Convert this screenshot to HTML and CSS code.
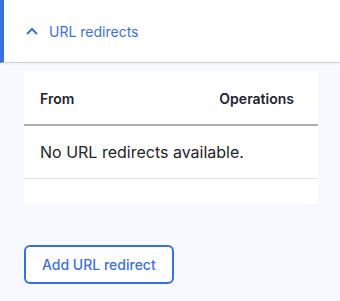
FILE: index.html
```html
<!DOCTYPE html>
<html>
<head>
<meta charset="utf-8">
<link rel="stylesheet" href="styles.css">
</head>
<body>
<div class="summary">
  <svg class="chevron" width="12" height="8" viewBox="0 0 12 8"><polyline points="1,7 6,2 11,7" fill="none" stroke="currentColor" stroke-width="2"/></svg>
  <span class="summary-label">URL redirects</span>
</div>
<div class="content">
  <div class="card">
    <table class="table">
      <thead>
        <tr><th class="col-from">From</th><th class="col-ops">Operations</th></tr>
      </thead>
      <tbody>
        <tr><td colspan="2">No URL redirects available.</td></tr>
      </tbody>
    </table>
  </div>
  <button class="btn">Add URL redirect</button>
</div>
</body>
</html>
```
FILE: styles.css
```css
html, body {
  margin: 0;
  padding: 0;
  background: #f8f9fe;
  font-family: Inter, "Noto Sans", sans-serif;
  color: #232429;
}
.summary {
  height: 62px;
  background: #fff;
  border-left: 4px solid #3470e0;
  border-bottom: 1px solid #cfd0d4;
  box-shadow: 0 1px 3px rgba(0,0,0,0.04);
  display: flex;
  align-items: center;
  padding-left: 22px;
  gap: 11px;
  color: #3d70de;
  font-size: 14px;
  box-sizing: content-box;
}
.chevron {
  display: block;
}
.content {
  padding: 9px 22px 0 24px;
}
.card {
  background: #fff;
  padding-bottom: 25px;
}
.table {
  width: 100%;
  border-collapse: collapse;
  font-size: 14px;
}
.table th {
  font-weight: 600;
  text-align: left;
  height: 52px;
  padding: 0 16px;
  border-bottom: 2px solid #aeafb3;
  color: #222330;
}
.table th.col-ops {
  text-align: right;
  padding-right: 24px;
}
.table td {
  height: 52px;
  padding: 0 16px;
  font-size: 16px;
  border-bottom: 1px solid #e3e4e8;
}
.btn {
  margin-top: 41px;
  height: 39px;
  padding: 0 16px;
  border: 2px solid #3470e0;
  border-radius: 6px;
  background: #fff;
  color: #3d70de;
  font-family: Inter, "Noto Sans", sans-serif;
  font-size: 14px;
  font-weight: 500;
}
```
